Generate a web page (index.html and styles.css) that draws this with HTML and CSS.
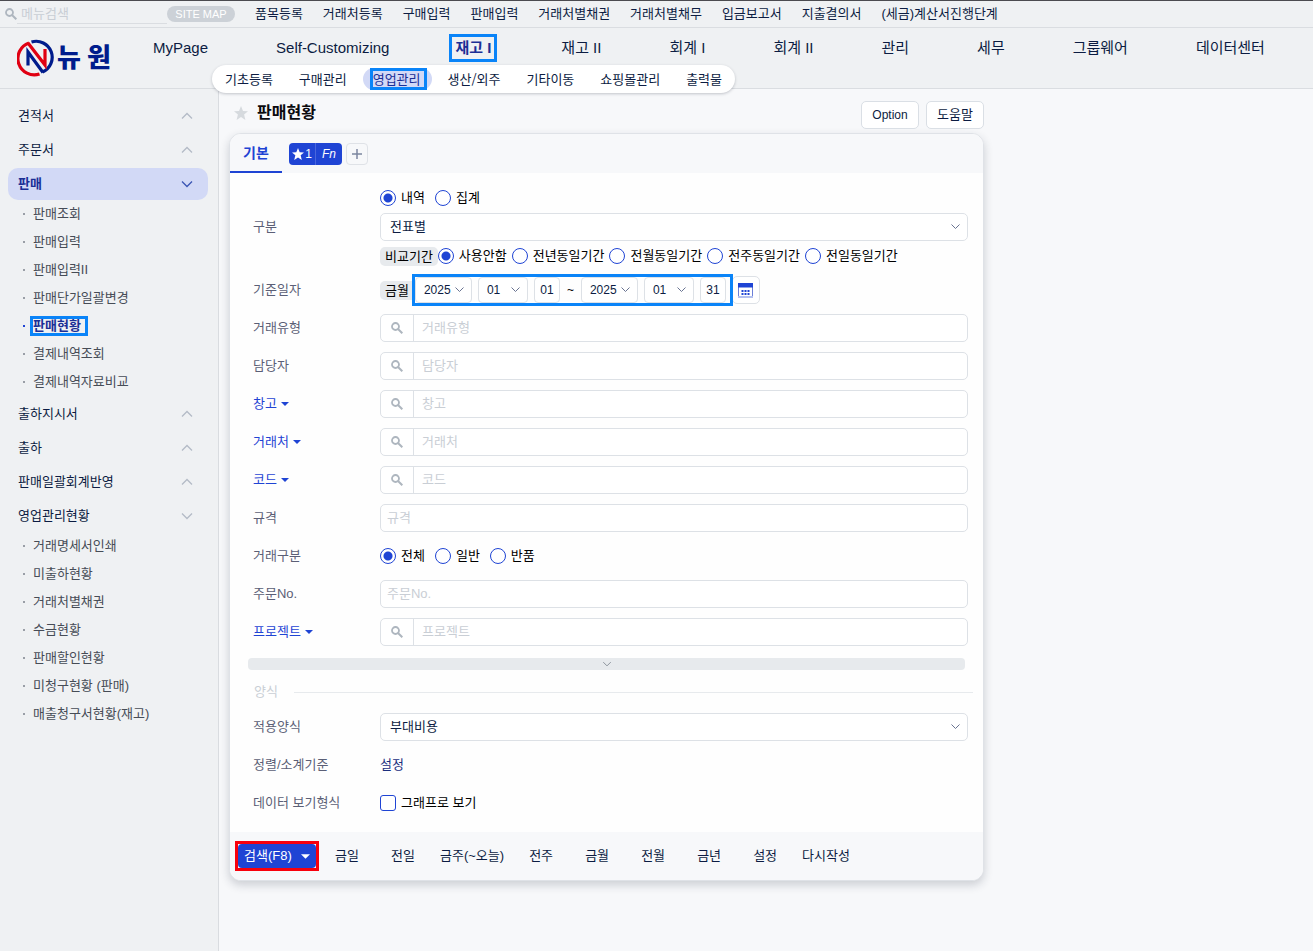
FILE: index.html
```html
<!DOCTYPE html>
<html lang="ko">
<head>
<meta charset="utf-8">
<title>판매현황</title>
<link rel="stylesheet" href="styles.css">
</head>
<body>
<svg class="defs" aria-hidden="true">
  <symbol id="search" viewBox="0 0 12 12"><circle cx="4.5" cy="4.5" r="3.5" fill="none" stroke="currentColor" stroke-width="1.8"/><path d="M7 7l4.3 4.3" stroke="currentColor" stroke-width="2"/></symbol>
  <symbol id="up" viewBox="0 0 12 8"><path d="M1 6.5L6 1.5l5 5" fill="none" stroke="currentColor" stroke-width="1.3"/></symbol>
  <symbol id="down" viewBox="0 0 12 8"><path d="M1 1.5l5 5 5-5" fill="none" stroke="currentColor" stroke-width="1.3"/></symbol>
  <symbol id="caret" viewBox="0 0 8 4"><path d="M0 0h8L4 4z" fill="currentColor"/></symbol>
  <symbol id="star" viewBox="0 0 14 14"><path d="M7 0l2 5 5 .3-3.900 3.300L11.400 14 7 11 2.600 14l1.300-5.400L0 5.300 5 5z" fill="currentColor"/></symbol>
</svg>

<div class="topbar">
  <label class="menu-search"><svg class="ico"><use href="#search"/></svg><input type="text" placeholder="메뉴검색" aria-label="메뉴검색"></label>
  <button class="sitemap" type="button">SITE MAP</button>
  <nav class="quick">
    <a href="#">품목등록</a><a href="#">거래처등록</a><a href="#">구매입력</a><a href="#">판매입력</a><a href="#">거래처별채권</a><a href="#">거래처별채무</a><a href="#">입금보고서</a><a href="#">지출결의서</a><a href="#">(세금)계산서진행단계</a>
  </nav>
</div>

<header class="header">
  <a class="logo" href="#">
    <svg class="mark" viewBox="-1 0 38 38" fill="none">
      <path d="M13.500 3A16 16 0 0 1 24.500 33" stroke="#001c8c" stroke-width="3.200"/>
      <path d="M11 4A16 16 0 0 0 21.500 35" stroke="#e00012" stroke-width="3.200"/>
      <path d="M10 26.500V13L25 33.500" stroke="#001c8c" stroke-width="3.200"/>
      <path d="M10 4L27 26V10" stroke="#e00012" stroke-width="3.200"/>
    </svg>
    <span>뉴</span><span>원</span>
  </a>
  <nav class="main-nav">
    <a href="#">MyPage</a><a href="#">Self-Customizing</a><a class="current" href="#">재고 I</a><a href="#">재고 II</a><a href="#">회계 I</a><a href="#">회계 II</a><a href="#">관리</a><a href="#">세무</a><a href="#">그룹웨어</a><a href="#">데이터센터</a>
  </nav>
  <nav class="sub-nav">
    <a href="#">기초등록</a><a href="#">구매관리</a><a class="current" href="#"><span>영업관리</span></a><a href="#">생산/외주</a><a href="#">기타이동</a><a href="#">쇼핑몰관리</a><a href="#">출력물</a>
  </nav>
</header>

<div class="shell">
  <aside class="sidebar">
    <a class="group" href="#">견적서<svg class="chev"><use href="#up"/></svg></a>
    <a class="group" href="#">주문서<svg class="chev"><use href="#up"/></svg></a>
    <a class="group open active" href="#">판매<svg class="chev"><use href="#down"/></svg></a>
    <ul class="subs">
      <li><a href="#">판매조회</a></li>
      <li><a href="#">판매입력</a></li>
      <li><a href="#">판매입력II</a></li>
      <li><a href="#">판매단가일괄변경</a></li>
      <li class="current"><a href="#">판매현황</a></li>
      <li><a href="#">결제내역조회</a></li>
      <li><a href="#">결제내역자료비교</a></li>
    </ul>
    <a class="group" href="#">출하지시서<svg class="chev"><use href="#up"/></svg></a>
    <a class="group" href="#">출하<svg class="chev"><use href="#up"/></svg></a>
    <a class="group" href="#">판매일괄회계반영<svg class="chev"><use href="#up"/></svg></a>
    <a class="group open" href="#">영업관리현황<svg class="chev"><use href="#down"/></svg></a>
    <ul class="subs">
      <li><a href="#">거래명세서인쇄</a></li>
      <li><a href="#">미출하현황</a></li>
      <li><a href="#">거래처별채권</a></li>
      <li><a href="#">수금현황</a></li>
      <li><a href="#">판매할인현황</a></li>
      <li><a href="#">미청구현황 (판매)</a></li>
      <li><a href="#">매출청구서현황(재고)</a></li>
    </ul>
  </aside>

  <main class="main">
    <div class="title-row">
      <svg class="fav"><use href="#star"/></svg>
      <h1>판매현황</h1>
      <button class="plain" type="button">Option</button>
      <button class="plain" type="button">도움말</button>
    </div>

    <form class="card">
      <div class="tabs">
        <button class="tab" type="button">기본</button>
        <div class="fn"><button type="button"><svg><use href="#star"/></svg>1</button><button type="button"><i>Fn</i></button></div>
        <button class="add" type="button" aria-label="추가"><svg viewBox="0 0 10 10"><path d="M5 0v10M0 5h10" stroke="currentColor" stroke-width="1.500"/></svg></button>
      </div>

      <div class="body">
        <div class="row">
          <label class="name" for="kind">구분</label>
          <div class="stack">
            <div class="radios">
              <label><input type="radio" name="view" checked>내역</label>
              <label><input type="radio" name="view">집계</label>
            </div>
            <select id="kind" class="wide"><option>전표별</option></select>
            <div class="radios tight">
              <span class="chip">비교기간</span>
              <label><input type="radio" name="cmp" checked>사용안함</label>
              <label><input type="radio" name="cmp">전년동일기간</label>
              <label><input type="radio" name="cmp">전월동일기간</label>
              <label><input type="radio" name="cmp">전주동일기간</label>
              <label><input type="radio" name="cmp">전일동일기간</label>
            </div>
          </div>
        </div>
        <div class="row">
          <label class="name" for="y1">기준일자</label>
          <div class="dates">
            <span class="chip month">금월</span>
            <div class="range">
              <select id="y1" class="year"><option>2025</option></select>
              <select class="mon" aria-label="시작 월"><option>01</option></select>
              <input class="day" type="text" value="01" aria-label="시작 일">
              <span class="tilde">~</span>
              <select class="year" aria-label="종료 연도"><option>2025</option></select>
              <select class="mon" aria-label="종료 월"><option>01</option></select>
              <input class="day" type="text" value="31" aria-label="종료 일">
            </div>
            <button class="cal" type="button" aria-label="달력"><svg viewBox="0 0 15 15"><path d="M.5.500h14v14H.5z" fill="#fff" stroke="#6b7fd8"/><path d="M0 0h15v4.500H0z" fill="#1f44d4"/><path d="M0 13h15v2H0z" fill="#b4c0ee"/><path d="M3.500 7h2v2h-2zm3 0h2v2h-2zm3 0h2v2h-2zm-6 3h2v2h-2zm3 0h2v2h-2zm3 0h2v2h-2z" fill="#1f44d4"/></svg></button>
          </div>
        </div>
        <div class="row"><label class="name" for="f1">거래유형</label><div class="find"><button type="button" aria-label="검색"><svg class="ico"><use href="#search"/></svg></button><input id="f1" type="text" placeholder="거래유형"></div></div>
        <div class="row"><label class="name" for="f2">담당자</label><div class="find"><button type="button" aria-label="검색"><svg class="ico"><use href="#search"/></svg></button><input id="f2" type="text" placeholder="담당자"></div></div>
        <div class="row"><label class="name more" for="f3">창고<svg><use href="#caret"/></svg></label><div class="find"><button type="button" aria-label="검색"><svg class="ico"><use href="#search"/></svg></button><input id="f3" type="text" placeholder="창고"></div></div>
        <div class="row"><label class="name more" for="f4">거래처<svg><use href="#caret"/></svg></label><div class="find"><button type="button" aria-label="검색"><svg class="ico"><use href="#search"/></svg></button><input id="f4" type="text" placeholder="거래처"></div></div>
        <div class="row"><label class="name more" for="f5">코드<svg><use href="#caret"/></svg></label><div class="find"><button type="button" aria-label="검색"><svg class="ico"><use href="#search"/></svg></button><input id="f5" type="text" placeholder="코드"></div></div>
        <div class="row"><label class="name" for="f6">규격</label><div class="find"><input id="f6" class="bare" type="text" placeholder="규격"></div></div>
        <div class="row"><span class="name">거래구분</span>
          <div class="radios">
            <label><input type="radio" name="deal" checked>전체</label>
            <label><input type="radio" name="deal">일반</label>
            <label><input type="radio" name="deal">반품</label>
          </div>
        </div>
        <div class="row"><label class="name" for="f7">주문No.</label><div class="find"><input id="f7" class="bare" type="text" placeholder="주문No."></div></div>
        <div class="row"><label class="name more" for="f8">프로젝트<svg><use href="#caret"/></svg></label><div class="find"><button type="button" aria-label="검색"><svg class="ico"><use href="#search"/></svg></button><input id="f8" type="text" placeholder="프로젝트"></div></div>
      </div>

      <button class="fold" type="button" aria-label="펼치기"><svg><use href="#down"/></svg></button>
      <div class="section">양식</div>

      <div class="body last">
        <div class="row"><label class="name" for="form">적용양식</label><select id="form" class="wide"><option>부대비용</option></select></div>
        <div class="row"><span class="name">정렬/소계기준</span><a class="set" href="#">설정</a></div>
        <div class="row"><span class="name">데이터 보기형식</span><div class="radios"><label><input type="checkbox">그래프로 보기</label></div></div>
      </div>

      <div class="actions">
        <div class="mark-box"><button class="go" type="button">검색(F8)<svg><use href="#caret"/></svg></button></div>
        <button type="button">금일</button><button type="button">전일</button><button type="button">금주(~오늘)</button><button type="button">전주</button><button type="button">금월</button><button type="button">전월</button><button type="button">금년</button><button type="button">설정</button><button type="button">다시작성</button>
      </div>
    </form>
  </main>
</div>
</body>
</html>
```
FILE: styles.css
```css
* { box-sizing: border-box; }
body {
  margin: 0;
  min-height: 100vh;
  display: flex;
  flex-direction: column;
  background: #f7f8fa;
  color: #0c1c42;
  font: 13px/20px "Liberation Sans", "Noto Sans CJK KR", sans-serif;
}
a { color: inherit; text-decoration: none; white-space: nowrap; }
button, input, select { font: inherit; color: inherit; margin: 0; }
button { padding: 0; border: 0; background: none; white-space: nowrap; }
input::placeholder { color: #c9ced5; opacity: 1; }
.defs { display: none; }
.ico { width: 12px; height: 12px; color: #aeb6bf; flex: none; }

.topbar {
  display: flex;
  align-items: center;
  height: 28px;
  background: #eff1f3;
  border-top: 1px solid #4b4b50;
  border-bottom: 1px solid #dadde1;
}
.menu-search { display: flex; align-items: center; width: 167px; padding-left: 5px; }
.menu-search input {
  width: 150px;
  height: 20px;
  padding: 0 4px;
  border: 0;
  border-bottom: 1px solid #dadde1;
  background: none;
}
.sitemap {
  width: 68px;
  height: 16px;
  border-radius: 8px;
  background: #ccd1d7;
  color: #fff;
  font-size: 11px;
  line-height: 16px;
}
.quick { display: flex; gap: 20px; padding-left: 20px; }

.header {
  position: relative;
  display: flex;
  height: 61px;
  background: #eff1f3;
  border-bottom: 1px solid #dadde1;
}
.logo {
  display: flex;
  align-items: center;
  width: 153px;
  padding-left: 17px;
  gap: 6px;
  color: #001c8c;
  font-size: 26px;
  font-weight: 900;
}
.mark { width: 38px; height: 38px; margin-right: -4px; }
.main-nav {
  flex: 1;
  display: flex;
  justify-content: space-between;
  align-items: flex-start;
  padding: 10px 48px 0 0;
  font-size: 15px;
}
.main-nav .current {
  margin: 0 0 0 -4px;
  padding: 0 2px;
  color: #1b2f96;
  font-weight: 700;
  outline: 3px solid #0a84f8;
  outline-offset: 1px;
}
.sub-nav {
  position: absolute;
  left: 212px;
  top: 37px;
  z-index: 2;
  display: flex;
  align-items: center;
  gap: 6px;
  height: 28px;
  padding: 0 3px;
  border-radius: 14px;
  background: #fff;
  box-shadow: 0 1px 3px rgba(30, 40, 60, .25);
  font-family: "Noto Sans CJK KR", sans-serif;
}
.sub-nav a { padding: 1px 10px; border-radius: 11px; }
.sub-nav .current { background: #d2d9f6; color: #1b2f96; padding-right: 8px; }
.sub-nav span { display: inline-block; line-height: 16px; padding-right: 3px; outline: 3px solid #0a84f8; }

.shell { flex: 1; display: flex; }
.sidebar {
  flex: none;
  width: 219px;
  padding: 11px 10px 0 8px;
  background: #eff1f3;
  border-right: 1px solid #d9dce0;
}
.group {
  display: flex;
  align-items: center;
  justify-content: space-between;
  height: 32px;
  margin-bottom: 2px;
  padding: 0 15px 0 10px;
  border-radius: 10px;
}
.open { margin-bottom: 0; }
.active { background: #d2d9f6; color: #1b2f96; font-weight: 700; }
.chev { width: 12px; height: 8px; color: #b4bbc6; }
.active .chev { color: #3a55b4; }
.subs { list-style: none; margin: 0 0 2px; padding: 0 0 0 15px; color: #464c56; }
.subs li { display: flex; align-items: center; gap: 8px; height: 28px; }
.subs li::before { content: ""; width: 2px; height: 2px; background: #999ea6; }
.subs .current { color: #1b2f96; font-weight: 700; }
.subs .current::before { background: #1f44d4; }
.subs .current a { line-height: 14px; outline: 3px solid #0a84f8; padding-right: 4px; }

.main { flex: 1; padding: 12px 10px; }
.title-row { display: flex; align-items: center; gap: 7px; max-width: 755px; height: 28px; }
.fav { width: 14px; height: 14px; margin: 0 0 4px 5px; color: #d6dade; }
h1 { flex: 1; margin: 0 0 4px; padding-left: 2px; font-size: 16px; line-height: 24px; color: #0a0a0e; }
.plain {
  width: 58px;
  height: 28px;
  border: 1px solid #dadfe5;
  border-radius: 5px;
  background: #fff;
}
.plain:not(:last-child) { font-size: 12px; }

.card {
  max-width: 755px;
  margin-top: 4px;
  border: 1px solid #dfe2e7;
  border-radius: 12px;
  background: #fefefe;
  box-shadow: 0 4px 10px rgba(30, 40, 60, .2);
  overflow: hidden;
}
.tabs { display: flex; align-items: center; height: 39px; background: #f7f8fa; }
.tab {
  width: 52px;
  height: 39px;
  border-bottom: 2px solid #1f44d4;
  color: #1f44d4;
  font-size: 14px;
  font-weight: 700;
}
.fn { display: flex; margin-left: 7px; border-radius: 4px; background: #1f44d4; color: #fff; }
.fn button { display: flex; align-items: center; justify-content: center; gap: 1px; width: 26px; height: 22px; font-size: 12px; }
.fn button:first-child { width: 27px; border-right: 1px solid #4966dc; }
.fn svg { width: 12px; height: 12px; }
.add {
  display: grid;
  place-items: center;
  width: 22px;
  height: 22px;
  margin-left: 4px;
  border: 1px solid #dfe2e7;
  border-radius: 4px;
  color: #7c86a0;
}
.add svg { width: 10px; height: 10px; }

.body { display: flex; flex-direction: column; gap: 10px; padding: 15px 15px 0 23px; }
.body.last { padding-top: 11px; padding-bottom: 15px; }
.row { display: grid; grid-template-columns: 127px 1fr; align-items: center; min-height: 28px; }
.name { color: #5b5f76; white-space: nowrap; }
.more { display: flex; align-items: center; gap: 4px; color: #1f44d4; }
.more svg { width: 8px; height: 4px; }
.stack { display: flex; flex-direction: column; gap: 5px; }
.radios { display: flex; align-items: center; gap: 10px; height: 20px; color: #000; }
.radios label { display: flex; align-items: center; gap: 5px; white-space: nowrap; }
.tight { gap: 5px; }
.tight .chip { margin-right: -5px; }
input[type="radio"], input[type="checkbox"] {
  appearance: none;
  flex: none;
  width: 16px;
  height: 16px;
  border: 1px solid #1f44d4;
  border-radius: 3px;
  background: #fff;
}
input[type="radio"] { border-radius: 50%; }
input[type="radio"]:checked { background: radial-gradient(circle, #1f44d4 4px, #fff 5px); }
.chip {
  padding: 0 5px;
  border-radius: 5px;
  background: #e7eaed;
  color: #000;
  line-height: 19px;
  white-space: nowrap;
}
.month { padding-right: 6px; border-radius: 5px 0 0 5px; }
select {
  appearance: none;
  height: 28px;
  padding: 0 9px;
  border: 1px solid #dde1e6;
  border-radius: 5px;
  background: #fff url("data:image/svg+xml,%3Csvg xmlns='http://www.w3.org/2000/svg' width='9' height='6'%3E%3Cpath d='M.5.5l4 4 4-4' fill='none' stroke='%23697391'/%3E%3C/svg%3E") no-repeat right 7px center;
}
.wide { width: 100%; }
.dates { display: flex; align-items: center; }
.range {
  position: relative;
  z-index: 1;
  display: flex;
  align-items: center;
  gap: 6px;
  height: 26px;
  padding-right: 4px;
  outline: 3px solid #0a84f8;
  font-size: 12px;
}
.range select, .day { height: 26px; border: 1px solid #dde1e6; border-radius: 4px; background-color: #fff; }
.range select { padding-left: 8px; }
.year { width: 57px; }
.mon { width: 50px; }
.day { width: 26px; padding: 0; text-align: center; }
.tilde { width: 9px; text-align: center; color: #000; }
.cal {
  display: grid;
  place-items: center;
  width: 28px;
  height: 28px;
  margin-left: 2px;
  border: 1px solid #dde1e6;
  border-radius: 5px;
  background: #fff;
}
.cal svg { width: 15px; height: 15px; }
.find { display: flex; height: 28px; border: 1px solid #dde1e6; border-radius: 5px; background: #fff; overflow: hidden; }
.find button { display: grid; place-items: center; width: 33px; border-right: 1px solid #dde1e6; }
.find input { flex: 1; min-width: 0; padding: 0 8px; border: 0; background: none; }
.find .bare { padding: 0 6px; }
.fold {
  display: grid;
  place-items: center;
  width: calc(100% - 36px);
  height: 12px;
  margin: 12px 18px 0;
  border-radius: 4px;
  background: #e7eaed;
  color: #8b929b;
}
.fold svg { width: 10px; height: 6px; }
.section { display: flex; align-items: center; gap: 16px; margin: 12px 10px 0 24px; color: #c9ced5; }
.section::after { content: ""; flex: 1; height: 1px; background: #e7eaed; }
.set { color: #1b2f7e; }
.actions { display: flex; align-items: center; gap: 6px; height: 48px; padding-left: 8px; background: #f7f8fa; }
.actions button { min-width: 50px; height: 24px; padding: 0 6px; }
.mark-box { outline: 3px solid #f8000c; }
.actions .go {
  display: flex;
  align-items: center;
  justify-content: space-between;
  width: 78px;
  border-radius: 4px;
  background: #1f44d4;
  color: #fff;
}
.go svg { width: 9px; height: 5px; }
```
